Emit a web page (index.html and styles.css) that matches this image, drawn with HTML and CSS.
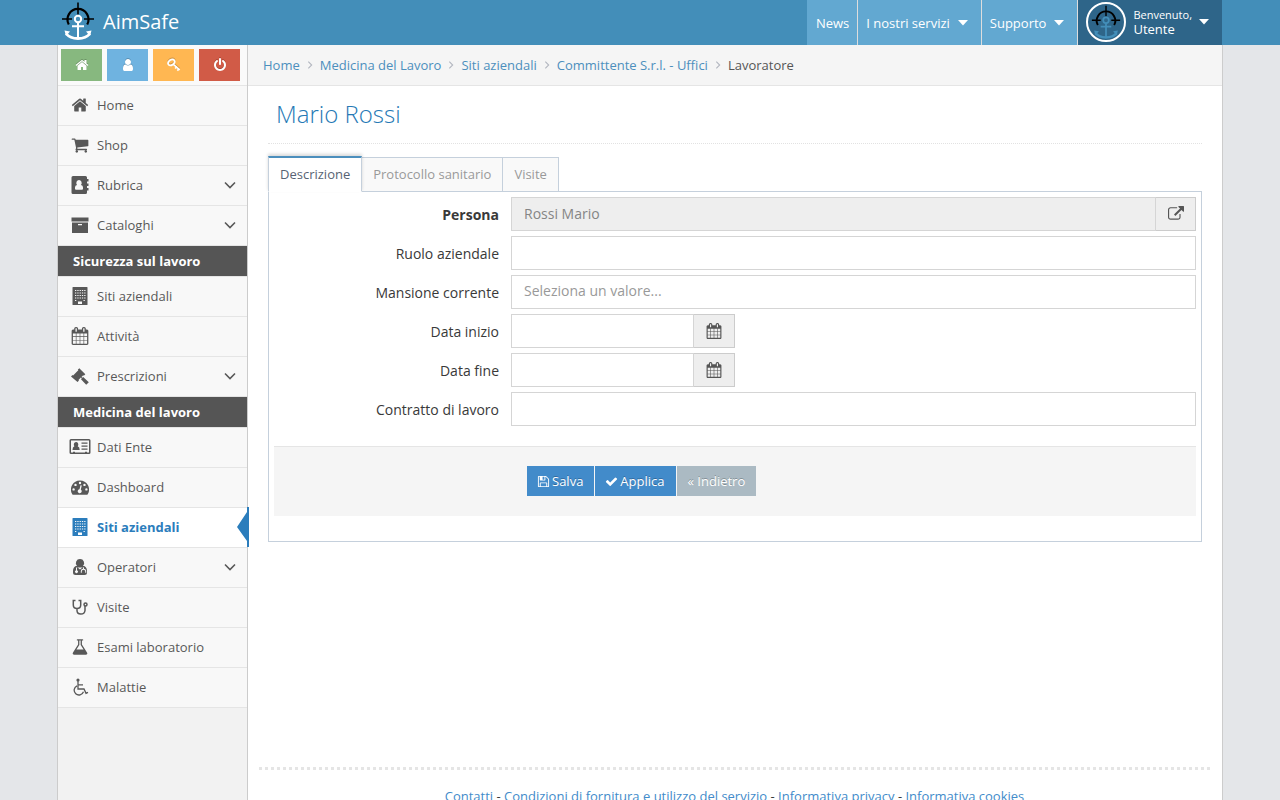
FILE: index.html
```html
<!DOCTYPE html>
<html lang="it">
<head>
<meta charset="utf-8">
<title>Mario Rossi - AimSafe</title>
<link rel="stylesheet" href="styles.css">
</head>
<body>
<svg class="sprite" aria-hidden="true">
  <symbol id="home" viewBox="0 0 1792 1792"><path d="M1472 992v480q0 26-19 45t-45 19h-384v-384h-256v384h-384q-26 0-45-19t-19-45v-480q0-1 .5-3t.5-3l575-474 575 474q1 2 1 6zm223-69l-62 74q-8 9-21 11h-3q-13 0-21-7l-692-577-692 577q-12 8-24 7-13-2-21-11l-62-74q-8-10-7-23.5t11-21.5l719-599q32-26 76-26t76 26l244 204v-195q0-14 9-23t23-9h192q14 0 23 9t9 23v408l219 182q10 8 11 21.5t-7 23.5z"/></symbol>
  <symbol id="cart" viewBox="0 0 1792 1792"><path d="M704 1536q0 52-38 90t-90 38-90-38-38-90 38-90 90-38 90 38 38 90zm896 0q0 52-38 90t-90 38-90-38-38-90 38-90 90-38 90 38 38 90zm128-1088v512q0 24-16.5 42.5t-40.5 21.5l-1044 122q13 60 13 70 0 16-24 64h920q26 0 45 19t19 45-19 45-45 19h-1024q-26 0-45-19t-19-45q0-11 8-31.5t16-36 21.5-40 15.5-29.5l-177-823h-204q-26 0-45-19t-19-45 19-45 45-19h256q16 0 28.5 6.5t19.5 15.5 13 24.5 8 26 5.5 29.5 4.5 26h1201q26 0 45 19t19 45z"/></symbol>
  <symbol id="user" viewBox="0 0 1792 1792"><path d="M1536 1399q0 109-62.5 187t-150.5 78h-854q-88 0-150.5-78t-62.5-187q0-85 8.5-160.5t31.5-152 58.5-131 94-89 134.5-34.5q131 128 313 128t313-128q76 0 134.5 34.5t94 89 58.5 131 31.5 152 8.5 160.5zm-256-887q0 159-112.5 271.5t-271.5 112.5-271.5-112.5-112.5-271.5 112.5-271.5 271.5-112.5 271.5 112.5 112.5 271.5z"/></symbol>
  <symbol id="power" viewBox="0 0 1792 1792"><path d="M1664 896q0 156-61 298t-164 245-245 164-298 61-298-61-245-164-164-245-61-298q0-182 80.5-343t226.5-270q43-32 95.5-25t83.5 50q32 42 24.5 94.5t-49.5 84.5q-98 74-151.5 181t-53.5 228q0 104 40.5 198.5t109.5 163.5 163.5 109.5 198.5 40.5 198.5-40.5 163.5-109.5 109.5-163.5 40.5-198.5q0-121-53.5-228t-151.5-181q-42-32-49.5-84.5t24.5-94.5q31-43 84-50t95 25q146 109 226.5 270t80.5 343zm-640-768v640q0 52-38 90t-90 38-90-38-38-90v-640q0-52 38-90t90-38 90 38 38 90z"/></symbol>
  <symbol id="calendar" viewBox="0 0 1792 1792"><path d="M192 1664h288v-288h-288v288zm352 0h320v-288h-320v288zm-352-352h288v-320h-288v320zm352 0h320v-320h-320v320zm-352-384h288v-288h-288v288zm736 736h320v-288h-320v288zm-384-736h320v-288h-320v288zm768 736h288v-288h-288v288zm-384-352h320v-320h-320v320zm-352-864v-288q0-13-9.5-22.5t-22.5-9.5h-64q-13 0-22.5 9.5t-9.5 22.5v288q0 13 9.5 22.5t22.5 9.5h64q13 0 22.5-9.5t9.5-22.5zm736 864h288v-320h-288v320zm-384-384h320v-288h-320v288zm384 0h288v-288h-288v288zm32-480v-288q0-13-9.5-22.5t-22.5-9.5h-64q-13 0-22.5 9.5t-9.5 22.5v288q0 13 9.5 22.5t22.5 9.5h64q13 0 22.5-9.5t9.5-22.5zm384-64v1280q0 52-38 90t-90 38h-1408q-52 0-90-38t-38-90v-1280q0-52 38-90t90-38h128v-96q0-66 47-113t113-47h64q66 0 113 47t47 113v96h384v-96q0-66 47-113t113-47h64q66 0 113 47t47 113v96h128q52 0 90 38t38 90z"/></symbol>
  <symbol id="external" viewBox="0 0 1792 1792"><path d="M1408 928v320q0 119-84.5 203.5t-203.5 84.5h-832q-119 0-203.5-84.5t-84.5-203.5v-832q0-119 84.5-203.5t203.5-84.5h704q14 0 23 9t9 23v64q0 14-9 23t-23 9h-704q-66 0-113 47t-47 113v832q0 66 47 113t113 47h832q66 0 113-47t47-113v-320q0-14 9-23t23-9h64q14 0 23 9t9 23zm384-864v512q0 26-19 45t-45 19-45-19l-176-176-652 652q-10 10-23 10t-23-10l-114-114q-10-10-10-23t10-23l652-652-176-176q-19-19-19-45t19-45 45-19h512q26 0 45 19t19 45z"/></symbol>
  <symbol id="save" viewBox="0 0 1792 1792"><path d="M512 1536h768v-384h-768v384zm896 0h128v-896q0-14-10-38.5t-20-34.5l-281-281q-10-10-34-20t-39-10v416q0 40-28 68t-68 28h-576q-40 0-68-28t-28-68v-416h-128v1280h128v-416q0-40 28-68t68-28h832q40 0 68 28t28 68v416zm-384-928v-320q0-13-9.5-22.5t-22.5-9.5h-192q-13 0-22.5 9.5t-9.5 22.5v320q0 13 9.5 22.5t22.5 9.5h192q13 0 22.5-9.5t9.5-22.5zm640 32v928q0 40-28 68t-68 28h-1344q-40 0-68-28t-28-68v-1344q0-40 28-68t68-28h928q40 0 88 20t76 48l280 280q28 28 48 76t20 88z"/></symbol>
  <symbol id="check" viewBox="0 0 1792 1792"><path d="M1671 566q0 40-28 68l-724 724-136 136q-28 28-68 28t-68-28l-136-136-362-362q-28-28-28-68t28-68l136-136q28-28 68-28t68 28l294 295 656-657q28-28 68-28t68 28l136 136q28 28 28 68z"/></symbol>
  <symbol id="flask" viewBox="0 0 1792 1792"><path d="M1591 1448q56 89 21.5 152.5t-140.5 63.5h-1152q-106 0-140.5-63.5t21.5-152.5l503-793v-399h-64q-26 0-45-19t-19-45 19-45 45-19h512q26 0 45 19t19 45-19 45-45 19h-64v399zm-779-725l-272 429h712l-272-429-20-31v-436h-128v436z"/></symbol>
  <symbol id="key" viewBox="0 0 16 16"><g fill="none" stroke="currentColor"><ellipse cx="5" cy="5" rx="4" ry="2.900" transform="rotate(-35 5 5)" stroke-width="2"/><path d="M7 7l7.500 6.500" stroke-width="1.800"/><path d="M9.300 12l2-2.200M11.800 14.500l2-2.200" stroke-width="2"/></g></symbol>
  <symbol id="book" viewBox="0 0 18 20"><path fill-rule="evenodd" d="M2 1h12.500a1.500 1.500 0 0 1 1.500 1.500v15a1.500 1.500 0 0 1-1.500 1.500H2a1.500 1.500 0 0 1-1.500-1.500v-15A1.500 1.500 0 0 1 2 1zM8 5a2.700 3 0 0 0-2 5Q4 10.300 4 12.500v1.300q0 1 1 1h6q1 0 1-1v-1.300q0-2.200-2-2.500A2.700 3 0 0 0 8 5z"/><path d="M16 4h1.500v2.500H16zM16 8.500h1.500V11H16zM16 13h1.500v2.500H16z"/></symbol>
  <symbol id="archive" viewBox="0 0 18 18"><path fill-rule="evenodd" d="M.5 1.500h17v4H.5zM1 6.500h16V17H1zM7 8v1.200h4V8z"/></symbol>
  <symbol id="building" viewBox="0 0 18 20"><path fill-rule="evenodd" d="M2 1h14q.5 0 .5.500v17q0 .500-.5.500H2q-.5 0-.5-.500v-17Q1.500 1 2 1zM7 15.500V18h4v-2.500z"/><path d="M4 4.500h10.500M4 7h10.500M4 9.500h10.500M4 12h10.500M4 14.500h2M12.500 14.500h2" fill="none" class="windows" stroke-width="1.200" stroke-dasharray="1.300 1"/></symbol>
  <symbol id="gavel" viewBox="0 0 18 18"><path d="M0 9.500l1.500-1.500.6.500 5.200-5.200-.5-.6L8.300 1.200l6 6-1.500 1.500-.6-.5-1.700 1.700.9.900.8-.8 5.600 5.200-2.600 2.600-5.200-5.600.8-.8-.9-.9-2.400 2.400.5.600L6.500 15z"/></symbol>
  <symbol id="card" viewBox="0 0 22 18"><path fill-rule="evenodd" d="M2 1h18q1.500 0 1.500 1.500v12q0 1.500-1.500 1.500H2Q.5 16 .5 14.500v-12Q.5 1 2 1zm0 1.500v12h2v-.7h2v.7h10v-.7h2v.7h2v-12z"/><path d="M7 4a2.300 2.500 0 0 0-1.600 4.200Q3.500 8.800 3.500 12h7.200q0-3.200-2-3.800A2.300 2.500 0 0 0 7 4zM12.500 4.500h6v1.200h-6zM12.500 7.500h6v1.200h-6zM12.500 10.500h6v1.200h-6z"/></symbol>
  <symbol id="gauge" viewBox="0 0 18 18"><path fill-rule="evenodd" d="M9 2.500a9 9 0 0 1 7.700 13.700q-.3.500-.9.500H2.200q-.6 0-.9-.5A9 9 0 0 1 9 2.500zM9 3.800a1.200 1.200 0 1 0 0 2.400 1.200 1.200 0 0 0 0-2.400zM4.500 5.700a1.200 1.200 0 1 0 0 2.400 1.200 1.200 0 0 0 0-2.400zM13.500 5.700a1.200 1.200 0 1 0 0 2.400 1.200 1.200 0 0 0 0-2.400zM2.600 10.200a1.200 1.200 0 1 0 0 2.400 1.200 1.200 0 0 0 0-2.400zM15.400 10.200a1.200 1.200 0 1 0 0 2.400 1.200 1.200 0 0 0 0-2.400zM9.500 7.200l-1 4a2 2 0 1 0 1.300.3l1-3.900z"/></symbol>
  <symbol id="doctor" viewBox="0 0 18 18"><path fill-rule="evenodd" d="M9 1a4 4 0 0 1 3 6.800Q16 8.500 16 13v1.500q0 2.500-2.500 2.500h-9Q2 17 2 14.500V13q0-4.500 4-5.200A4 4 0 0 1 9 1zM5 9.500v2.700a1.500 1.500 0 1 0 1 0V9l3 2.500L12 9v1.700q-2.200.3-2.200 2.500v1.500h1v-1.500q0-1.500 1.700-1.500t1.700 1.500v1.500h1v-1.500q0-2.200-2.200-2.500V9.200z"/></symbol>
  <symbol id="stetho" viewBox="0 0 18 18"><g fill="none" stroke="currentColor" stroke-width="1.500"><path d="M4.500 2.500H2.300V7q0 3.500 3.700 3.500T9.700 7V2.500H7.500M6 10.500v2q0 3.500 3.800 3.500t4.200-3.500V8"/><circle cx="14.500" cy="6.500" r="1.500"/></g></symbol>
  <symbol id="wheel" viewBox="0 0 18 18"><circle cx="7" cy="2" r="1.600"/><path d="M7 3v8h6l2 4.300 2-1M7 6.800h5M6 7.800a4.800 4.800 0 1 0 6.500 6" fill="none" stroke="currentColor" stroke-width="1.300"/></symbol>
  <symbol id="chevron" viewBox="0 0 12 8"><path d="M1 1.500l5 5 5-5" fill="none" stroke="currentColor" stroke-width="1.600"/></symbol>
  <symbol id="caret" viewBox="0 0 10 6"><path d="M0 0h10L5 5.500z"/></symbol>
  <symbol id="logo" viewBox="0 0 34 40">
    <g fill="none" stroke="#000"><path d="M7.800 23.500a10.500 10.500 0 1 1 18.400 0" stroke-width="2.200"/><path d="M17 1.500v12M1 18h10M23 18h10" stroke-width="1.600"/></g>
    <g fill="none" stroke="currentColor"><circle cx="17" cy="18" r="3.200" stroke-width="2"/><path d="M17 21v16M11 25.200h12" stroke-width="2"/><path d="M5 32.500Q9 37.500 17 37.500t12-5" stroke-width="2.800"/></g>
    <path d="M3.500 29.500l5.500 1-4 4.500zM30.500 29.500l-5.500 1 4 4.500z" fill="currentColor"/>
  </symbol>
</svg>

<header class="navbar">
  <div class="navbar-inner">
    <a class="brand" href="#"><svg class="brand-logo"><use href="#logo"/></svg>AimSafe</a>
    <nav class="topnav">
      <a href="#">News</a>
      <a href="#">I nostri servizi <svg class="caret"><use href="#caret"/></svg></a>
      <a href="#">Supporto <svg class="caret"><use href="#caret"/></svg></a>
      <a class="account" href="#">
        <span class="avatar"><svg><use href="#logo"/></svg></span>
        <span class="welcome"><small>Benvenuto,</small>Utente</span>
        <svg class="caret"><use href="#caret"/></svg>
      </a>
    </nav>
  </div>
</header>

<div class="container">
  <aside class="sidebar">
    <div class="shortcuts">
      <button class="green" type="button" aria-label="Home"><svg><use href="#home"/></svg></button>
      <button class="blue" type="button" aria-label="Profilo"><svg><use href="#user"/></svg></button>
      <button class="orange" type="button" aria-label="Password"><svg><use href="#key"/></svg></button>
      <button class="red" type="button" aria-label="Esci"><svg><use href="#power"/></svg></button>
    </div>
    <nav class="menu">
      <a href="#"><svg class="icon"><use href="#home"/></svg>Home</a>
      <a href="#"><svg class="icon"><use href="#cart"/></svg>Shop</a>
      <a href="#"><svg class="icon tall"><use href="#book"/></svg>Rubrica<svg class="chevron"><use href="#chevron"/></svg></a>
      <a href="#"><svg class="icon"><use href="#archive"/></svg>Cataloghi<svg class="chevron"><use href="#chevron"/></svg></a>
      <h2>Sicurezza sul lavoro</h2>
      <a href="#"><svg class="icon tall"><use href="#building"/></svg>Siti aziendali</a>
      <a href="#"><svg class="icon"><use href="#calendar"/></svg>Attività</a>
      <a href="#"><svg class="icon"><use href="#gavel"/></svg>Prescrizioni<svg class="chevron"><use href="#chevron"/></svg></a>
      <h2>Medicina del lavoro</h2>
      <a href="#"><svg class="icon wide"><use href="#card"/></svg>Dati Ente</a>
      <a href="#"><svg class="icon"><use href="#gauge"/></svg>Dashboard</a>
      <a class="active" href="#" aria-current="page"><svg class="icon tall"><use href="#building"/></svg>Siti aziendali<svg class="pointer" viewBox="0 0 12 40"><path d="M10 0h2v40h-2v-6L0 20 10 5z"/></svg></a>
      <a href="#"><svg class="icon"><use href="#doctor"/></svg>Operatori<svg class="chevron"><use href="#chevron"/></svg></a>
      <a href="#"><svg class="icon"><use href="#stetho"/></svg>Visite</a>
      <a href="#"><svg class="icon"><use href="#flask"/></svg>Esami laboratorio</a>
      <a href="#"><svg class="icon"><use href="#wheel"/></svg>Malattie</a>
    </nav>
  </aside>

  <main class="main">
    <nav class="breadcrumbs" aria-label="Percorso">
      <a href="#">Home</a><svg><use href="#chevron"/></svg>
      <a href="#">Medicina del Lavoro</a><svg><use href="#chevron"/></svg>
      <a href="#">Siti aziendali</a><svg><use href="#chevron"/></svg>
      <a href="#">Committente S.r.l. - Uffici</a><svg><use href="#chevron"/></svg>
      <span>Lavoratore</span>
    </nav>
    <div class="content">
      <h1>Mario Rossi</h1>
      <div class="tabs" role="tablist">
        <button type="button" role="tab" class="current" aria-selected="true">Descrizione</button>
        <button type="button" role="tab" aria-selected="false">Protocollo sanitario</button>
        <button type="button" role="tab" aria-selected="false">Visite</button>
      </div>
      <form class="panel">
        <div class="row">
          <label class="required" for="persona">Persona</label>
          <div class="group"><input id="persona" type="text" value="Rossi Mario" disabled><button type="button" aria-label="Apri persona"><svg><use href="#external"/></svg></button></div>
        </div>
        <div class="row"><label for="ruolo">Ruolo aziendale</label><input id="ruolo" type="text"></div>
        <div class="row"><label for="mansione">Mansione corrente</label><select id="mansione"><option>Seleziona un valore...</option></select></div>
        <div class="row">
          <label for="inizio">Data inizio</label>
          <div class="group date"><input id="inizio" type="text"><button type="button" aria-label="Scegli data inizio"><svg><use href="#calendar"/></svg></button></div>
        </div>
        <div class="row">
          <label for="fine">Data fine</label>
          <div class="group date"><input id="fine" type="text"><button type="button" aria-label="Scegli data fine"><svg><use href="#calendar"/></svg></button></div>
        </div>
        <div class="row"><label for="contratto">Contratto di lavoro</label><input id="contratto" type="text"></div>
        <div class="actions">
          <button type="submit"><svg><use href="#save"/></svg>Salva</button>
          <button type="button"><svg><use href="#check"/></svg>Applica</button>
          <button type="button" class="back">« Indietro</button>
        </div>
      </form>
    </div>
    <footer class="footer">
      <a href="#">Contatti</a> - <a href="#">Condizioni di fornitura e utilizzo del servizio</a> - <a href="#">Informativa privacy</a> - <a href="#">Informativa cookies</a>
    </footer>
  </main>
</div>
</body>
</html>
```

FILE: styles.css
```css
* { box-sizing: border-box; }

body {
  margin: 0;
  background: #e4e6e9;
  color: #393939;
  font: 13px/20px "Open Sans", sans-serif;
}

a { color: #4c8fbd; text-decoration: none; }
svg { fill: currentColor; flex: none; }
button, input, select { font: inherit; margin: 0; border-radius: 0; }
.sprite { position: absolute; width: 0; height: 0; }

/* Top bar */
.navbar { background: #438eb9; }
.navbar-inner {
  display: flex;
  justify-content: space-between;
  max-width: 1164px;
  height: 45px;
  margin: 0 auto;
}
.brand {
  display: flex;
  align-items: center;
  gap: 8px;
  padding: 0 3px 2px;
  color: #fff;
  font-size: 20px;
}
.brand-logo { width: 34px; height: 40px; margin-bottom: 2px; }
.topnav { display: flex; }
.topnav a {
  display: flex;
  align-items: center;
  gap: 8px;
  padding: 0 8px;
  border-left: 1px solid #ddd;
  background: #62a8d1;
  color: #fff;
}
.topnav a:first-child { border-left: 0; padding-left: 9px; }
.caret { width: 10px; height: 6px; margin-right: 5px; }
.topnav .account { gap: 7px; padding: 0 13px 2px 8px; background: #2e6589; }
.account .caret { margin: 0; }
.avatar {
  display: flex;
  align-items: center;
  justify-content: center;
  width: 40px;
  height: 40px;
  border: 2px solid #fff;
  border-radius: 50%;
  color: #438eb9;
}
.avatar svg { width: 30px; height: 36px; }
.welcome { line-height: 15px; }
.welcome small { display: block; font-size: 11px; }

/* Columns */
.container {
  display: flex;
  max-width: 1166px;
  margin: 0 auto;
  border: solid #ccc;
  border-width: 0 1px;
  background: #fff;
}
.sidebar {
  width: 190px;
  flex: none;
  border-right: 1px solid #ccc;
  background: #f2f2f2;
}
.shortcuts {
  display: flex;
  gap: 5px;
  height: 40px;
  padding: 4px 3px;
  background: #fafafa;
}
.shortcuts button {
  display: flex;
  align-items: center;
  justify-content: center;
  width: 41px;
  padding: 0;
  border: 0;
  color: #fff;
}
.shortcuts svg { width: 14px; height: 14px; filter: drop-shadow(0 -1px 0 rgba(0, 0, 0, .2)); }
.green { background: #87b87f; }
.blue { background: #6fb3e0; }
.orange { background: #ffb752; }
.red { background: #d15b47; }

.menu { border-bottom: 1px solid #e5e5e5; }
.menu a {
  position: relative;
  display: flex;
  align-items: center;
  height: 40px;
  padding: 0 11px 2px;
  border-top: 1px solid #e5e5e5;
  background: #f8f8f8;
  color: #585858;
}
.icon { width: 18px; height: 18px; margin: 0 8px 0 2px; }
.icon.tall { height: 20px; }
.icon.wide { width: 22px; margin: 0 6px 0 0; }
.windows { stroke: #f8f8f8; }
.chevron { width: 12px; height: 8px; margin-left: auto; }
.menu h2 {
  margin: 0;
  padding: 0 15px;
  border-top: 1px solid #e5e5e5;
  background: #555;
  color: #fff;
  font-size: 13px;
  font-weight: 700;
  line-height: 30px;
}
.menu .active { background: #fff; color: #2b7dbc; font-weight: 700; }
.pointer { position: absolute; top: -1px; right: -2px; width: 12px; height: 40px; }

/* Main column */
.main {
  display: flex;
  flex: 1;
  flex-direction: column;
  min-height: 100vh;
}
.breadcrumbs {
  display: flex;
  align-items: center;
  height: 41px;
  padding: 0 15px;
  border-bottom: 1px solid #e5e5e5;
  background: #f5f5f5;
}
.breadcrumbs svg { width: 8px; height: 8px; margin: 0 6px; color: #b2b6bf; transform: rotate(-90deg); }
.breadcrumbs span { color: #555; }
.content { flex: 1; padding: 8px 20px; }
h1 {
  margin: 0 0 12px;
  padding: 0 8px 9px;
  border-bottom: 1px dotted #e2e2e2;
  color: #2679b5;
  font-size: 24px;
  font-weight: 300;
  line-height: 40px;
}

.tabs { display: flex; align-items: flex-end; }
.tabs button {
  height: 35px;
  padding: 0 11px 2px;
  border: 1px solid #c5d0dc;
  border-left: 0;
  background: #f9f9f9;
  color: #999;
}
.tabs .current {
  z-index: 1;
  height: 36px;
  border-top: 2px solid #4c8fbd;
  border-bottom-color: #fff;
  border-left: 1px solid #c5d0dc;
  background: #fff;
  box-shadow: 0 -2px 3px rgba(0, 0, 0, .15);
  color: #576373;
}
.panel {
  display: grid;
  gap: 5px;
  margin-top: -1px;
  padding: 5px 5px 25px;
  border: 1px solid #c5d0dc;
  font-size: 14px;
}
.row {
  display: grid;
  grid-template-columns: 225px 1fr;
  align-items: center;
  gap: 12px;
}
.row label { padding-top: 2px; text-align: right; }
.required { font-weight: 700; }
.row input, .row select {
  width: 100%;
  min-width: 0;
  height: 34px;
  padding: 0 12px 2px;
  border: 1px solid #d5d5d5;
  background: #fff;
  color: #858585;
}
.row select { appearance: none; color: #999; }
.row input:disabled { background: #eee; }
.group { display: flex; }
.group.date { width: 224px; }
.group button {
  display: flex;
  align-items: center;
  justify-content: center;
  flex: none;
  width: 40px;
  padding: 0;
  border: 1px solid #ccc;
  border-left: 0;
  background: #eee;
  color: #555;
}
.group.date button { width: 41px; }
.group button svg { width: 16px; height: 16px; }
.actions {
  display: flex;
  gap: 1px;
  margin-top: 15px;
  padding: 19px 253px 20px;
  border-top: 1px solid #e5e5e5;
  background: #f5f5f5;
}
.actions button {
  display: flex;
  align-items: center;
  gap: 2px;
  height: 30px;
  padding: 0 11px 0 10px;
  border: 0;
  background: #428bca;
  color: #fff;
  font-size: 13px;
  text-shadow: 0 -1px 0 rgba(0, 0, 0, .25);
  white-space: nowrap;
}
.actions .back { padding: 0 11px; background: #abbac3; }
.actions svg { width: 13px; height: 13px; }

.footer {
  height: 78px;
  margin: 0 12px 0 11px;
  padding-top: 16px;
  border-top: 3px dotted #e5e5e5;
  text-align: center;
}
.footer a { color: #428bca; }
```
